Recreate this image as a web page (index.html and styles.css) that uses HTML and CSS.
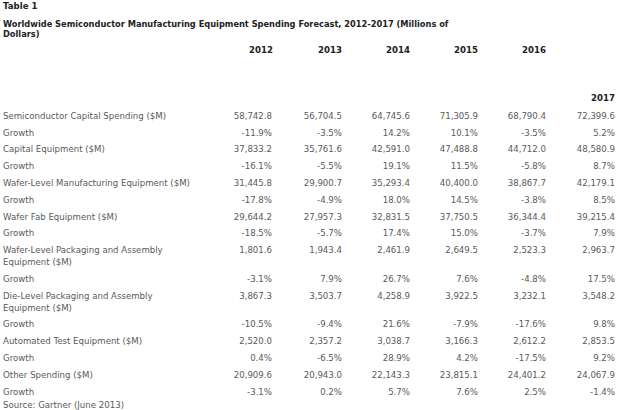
FILE: index.html
```html
<!DOCTYPE html>
<html lang="en">
<head>
<meta charset="utf-8">
<title>Table 1</title>
<link rel="stylesheet" href="styles.css">
</head>
<body>
<div class="page">
  <h3 class="caption">Table 1</h3>
  <h4 class="title">Worldwide Semiconductor Manufacturing Equipment Spending Forecast, 2012-2017 (Millions of Dollars)</h4>
  <table class="data">
    <colgroup>
      <col class="c-label"><col class="c-2012"><col class="c-2013"><col class="c-yr"><col class="c-yr"><col class="c-yr"><col class="c-2017">
    </colgroup>
    <thead>
      <tr>
        <th class="label"></th>
        <th class="yr first">2012</th>
        <th class="yr">2013</th>
        <th class="yr">2014</th>
        <th class="yr">2015</th>
        <th class="yr">2016</th>
        <th class="yr last">2017</th>
      </tr>
    </thead>
    <tbody>
      <tr><td class="label">Semiconductor Capital Spending ($M)</td><td>58,742.8</td><td>56,704.5</td><td>64,745.6</td><td>71,305.9</td><td>68,790.4</td><td>72,399.6</td></tr>
      <tr><td class="label">Growth</td><td>-11.9%</td><td>-3.5%</td><td>14.2%</td><td>10.1%</td><td>-3.5%</td><td>5.2%</td></tr>
      <tr><td class="label">Capital Equipment ($M)</td><td>37,833.2</td><td>35,761.6</td><td>42,591.0</td><td>47,488.8</td><td>44,712.0</td><td>48,580.9</td></tr>
      <tr><td class="label">Growth</td><td>-16.1%</td><td>-5.5%</td><td>19.1%</td><td>11.5%</td><td>-5.8%</td><td>8.7%</td></tr>
      <tr><td class="label">Wafer-Level Manufacturing Equipment ($M)</td><td>31,445.8</td><td>29,900.7</td><td>35,293.4</td><td>40,400.0</td><td>38,867.7</td><td>42,179.1</td></tr>
      <tr><td class="label">Growth</td><td>-17.8%</td><td>-4.9%</td><td>18.0%</td><td>14.5%</td><td>-3.8%</td><td>8.5%</td></tr>
      <tr><td class="label">Wafer Fab Equipment ($M)</td><td>29,644.2</td><td>27,957.3</td><td>32,831.5</td><td>37,750.5</td><td>36,344.4</td><td>39,215.4</td></tr>
      <tr><td class="label">Growth</td><td>-18.5%</td><td>-5.7%</td><td>17.4%</td><td>15.0%</td><td>-3.7%</td><td>7.9%</td></tr>
      <tr><td class="label">Wafer-Level Packaging and Assembly Equipment ($M)</td><td>1,801.6</td><td>1,943.4</td><td>2,461.9</td><td>2,649.5</td><td>2,523.3</td><td>2,963.7</td></tr>
      <tr><td class="label">Growth</td><td>-3.1%</td><td>7.9%</td><td>26.7%</td><td>7.6%</td><td>-4.8%</td><td>17.5%</td></tr>
      <tr><td class="label">Die-Level Packaging and Assembly Equipment ($M)</td><td>3,867.3</td><td>3,503.7</td><td>4,258.9</td><td>3,922.5</td><td>3,232.1</td><td>3,548.2</td></tr>
      <tr><td class="label">Growth</td><td>-10.5%</td><td>-9.4%</td><td>21.6%</td><td>-7.9%</td><td>-17.6%</td><td>9.8%</td></tr>
      <tr><td class="label">Automated Test Equipment ($M)</td><td>2,520.0</td><td>2,357.2</td><td>3,038.7</td><td>3,166.3</td><td>2,612.2</td><td>2,853.5</td></tr>
      <tr><td class="label">Growth</td><td>0.4%</td><td>-6.5%</td><td>28.9%</td><td>4.2%</td><td>-17.5%</td><td>9.2%</td></tr>
      <tr><td class="label">Other Spending ($M)</td><td>20,909.6</td><td>20,943.0</td><td>22,143.3</td><td>23,815.1</td><td>24,401.2</td><td>24,067.9</td></tr>
      <tr><td class="label">Growth</td><td>-3.1%</td><td>0.2%</td><td>5.7%</td><td>7.6%</td><td>2.5%</td><td>-1.4%</td></tr>
    </tbody>
  </table>
  <p class="source">Source: Gartner (June 2013)</p>
</div>
</body>
</html>
```

FILE: styles.css
```css
html, body {
  margin: 0;
  padding: 0;
  background: #ffffff;
}

.page {
  width: 618px;
  font-family: "DejaVu Sans", Verdana, sans-serif;
  font-size: 8.6px;
  color: #5a5a5a;
}

.caption {
  margin: 1px 0 0 3px;
  font-size: 8.6px;
  line-height: 10px;
  font-weight: bold;
  color: #222222;
}

.title {
  margin: 8px 0 0 3px;
  max-width: 460px;
  font-size: 8.25px;
  line-height: 10px;
  font-weight: bold;
  color: #222222;
}

.data {
  width: 617px;
  table-layout: fixed;
  border-collapse: collapse;
  border-spacing: 0;
}

.c-label { width: 200px; }
.c-2012 { width: 74px; }
.c-2013 { width: 70px; }
.c-yr { width: 68px; }
.c-2017 { width: 69px; }

.data th,
.data td {
  padding: 2.4px 2px 2.4px 0;
  line-height: 12px;
  text-align: right;
  vertical-align: top;
}

.data th {
  font-weight: bold;
  color: #222222;
  padding-top: 5px;
  padding-bottom: 0;
}

.data th.first {
  padding-right: 1px;
}

.data th.last {
  vertical-align: bottom;
  padding-top: 53px;
  padding-bottom: 3.5px;
}

.data td.label,
.data th.label {
  text-align: left;
  padding-left: 3px;
}

.source {
  margin: 0 0 0 3px;
  line-height: 10px;
}
```
